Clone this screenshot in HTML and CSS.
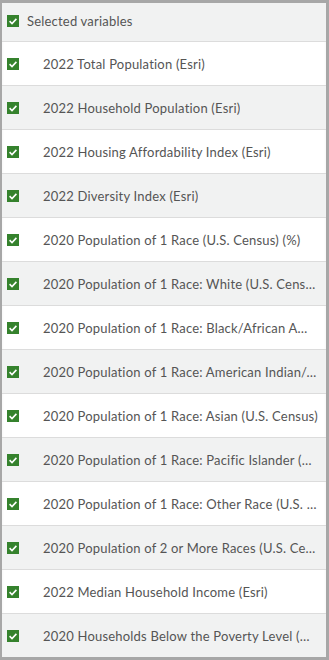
FILE: index.html
```html
<!DOCTYPE html>
<html>
<head>
    <meta charset="UTF-8">
    <title>Selected variables</title>
    <link rel="stylesheet" href="styles.css">
</head>
<body>
    <div class="panel">
        <div class="header">
            <span class="check"><svg viewBox="0 0 12 12"><path d="M2.6 6.2l2.4 2.3 4.4-4.6" fill="none" stroke="#fff" stroke-width="1.6"/></svg></span>
            <span class="header-label">Selected variables</span>
        </div>

        <ul class="list">
            <li><span class="check"><svg viewBox="0 0 12 12"><path d="M2.6 6.2l2.4 2.3 4.4-4.6" fill="none" stroke="#fff" stroke-width="1.6"/></svg></span><span class="label">2022 Total Population (Esri)</span></li>
            <li><span class="check"><svg viewBox="0 0 12 12"><path d="M2.6 6.2l2.4 2.3 4.4-4.6" fill="none" stroke="#fff" stroke-width="1.6"/></svg></span><span class="label">2022 Household Population (Esri)</span></li>
            <li><span class="check"><svg viewBox="0 0 12 12"><path d="M2.6 6.2l2.4 2.3 4.4-4.6" fill="none" stroke="#fff" stroke-width="1.6"/></svg></span><span class="label">2022 Housing Affordability Index (Esri)</span></li>
            <li><span class="check"><svg viewBox="0 0 12 12"><path d="M2.6 6.2l2.4 2.3 4.4-4.6" fill="none" stroke="#fff" stroke-width="1.6"/></svg></span><span class="label">2022 Diversity Index (Esri)</span></li>
            <li><span class="check"><svg viewBox="0 0 12 12"><path d="M2.6 6.2l2.4 2.3 4.4-4.6" fill="none" stroke="#fff" stroke-width="1.6"/></svg></span><span class="label">2020 Population of 1 Race (U.S. Census) (%)</span></li>
            <li><span class="check"><svg viewBox="0 0 12 12"><path d="M2.6 6.2l2.4 2.3 4.4-4.6" fill="none" stroke="#fff" stroke-width="1.6"/></svg></span><span class="label">2020 Population of 1 Race: White (U.S. Census)</span></li>
            <li><span class="check"><svg viewBox="0 0 12 12"><path d="M2.6 6.2l2.4 2.3 4.4-4.6" fill="none" stroke="#fff" stroke-width="1.6"/></svg></span><span class="label">2020 Population of 1 Race: Black/African American (U.S. Census)</span></li>
            <li><span class="check"><svg viewBox="0 0 12 12"><path d="M2.6 6.2l2.4 2.3 4.4-4.6" fill="none" stroke="#fff" stroke-width="1.6"/></svg></span><span class="label">2020 Population of 1 Race: American Indian/Alaska Native (U.S. Census)</span></li>
            <li><span class="check"><svg viewBox="0 0 12 12"><path d="M2.6 6.2l2.4 2.3 4.4-4.6" fill="none" stroke="#fff" stroke-width="1.6"/></svg></span><span class="label">2020 Population of 1 Race: Asian (U.S. Census)</span></li>
            <li><span class="check"><svg viewBox="0 0 12 12"><path d="M2.6 6.2l2.4 2.3 4.4-4.6" fill="none" stroke="#fff" stroke-width="1.6"/></svg></span><span class="label">2020 Population of 1 Race: Pacific Islander (U.S. Census)</span></li>
            <li><span class="check"><svg viewBox="0 0 12 12"><path d="M2.6 6.2l2.4 2.3 4.4-4.6" fill="none" stroke="#fff" stroke-width="1.6"/></svg></span><span class="label">2020 Population of 1 Race: Other Race (U.S. Census)</span></li>
            <li><span class="check"><svg viewBox="0 0 12 12"><path d="M2.6 6.2l2.4 2.3 4.4-4.6" fill="none" stroke="#fff" stroke-width="1.6"/></svg></span><span class="label">2020 Population of 2 or More Races (U.S. Census)</span></li>
            <li><span class="check"><svg viewBox="0 0 12 12"><path d="M2.6 6.2l2.4 2.3 4.4-4.6" fill="none" stroke="#fff" stroke-width="1.6"/></svg></span><span class="label">2022 Median Household Income (Esri)</span></li>
            <li><span class="check"><svg viewBox="0 0 12 12"><path d="M2.6 6.2l2.4 2.3 4.4-4.6" fill="none" stroke="#fff" stroke-width="1.6"/></svg></span><span class="label">2020 Households Below the Poverty Level (ACS)</span></li>
        </ul>
    </div>
</body>
</html>
```

FILE: styles.css
```css
:root {
    --frame: #a7a7a7;
    --line: #dcdcdc;
    --stripe: #f1f2f2;
    --text: #555;
    --green: #35822d;
}

body {
    margin: 0;
    font-family: Lato, 'Open Sans', sans-serif;
    font-size: 13px;
    letter-spacing: 0.2px;
    color: var(--text);
    background: #fff;
}

.panel {
    box-sizing: border-box;
    width: 329px;
    height: 660px;
    border-style: solid;
    border-color: var(--frame);
    border-width: 3px 3px 3px 2px;
    overflow: hidden;
    box-shadow: inset 0 2px 3px rgba(0, 0, 0, 0.06);
}

.header {
    display: flex;
    align-items: center;
    gap: 8px;
    height: 39px;
    padding: 0 0 2px 5px;
    box-sizing: border-box;
    background: var(--stripe);
    border-bottom: 1px solid var(--line);
}

.check {
    flex: none;
    display: block;
    width: 12px;
    height: 12px;
    background: var(--green);
}

.check svg {
    display: block;
    width: 12px;
    height: 12px;
}

.list {
    list-style: none;
    margin: 0;
    padding: 0;
}

.list li {
    display: flex;
    align-items: center;
    gap: 24px;
    height: 43px;
    padding: 0 8px 0 5px;
    border-bottom: 1px solid var(--line);
}

.list li:nth-child(even) {
    background: var(--stripe);
}

.label {
    white-space: nowrap;
    overflow: hidden;
    text-overflow: ellipsis;
}
```
